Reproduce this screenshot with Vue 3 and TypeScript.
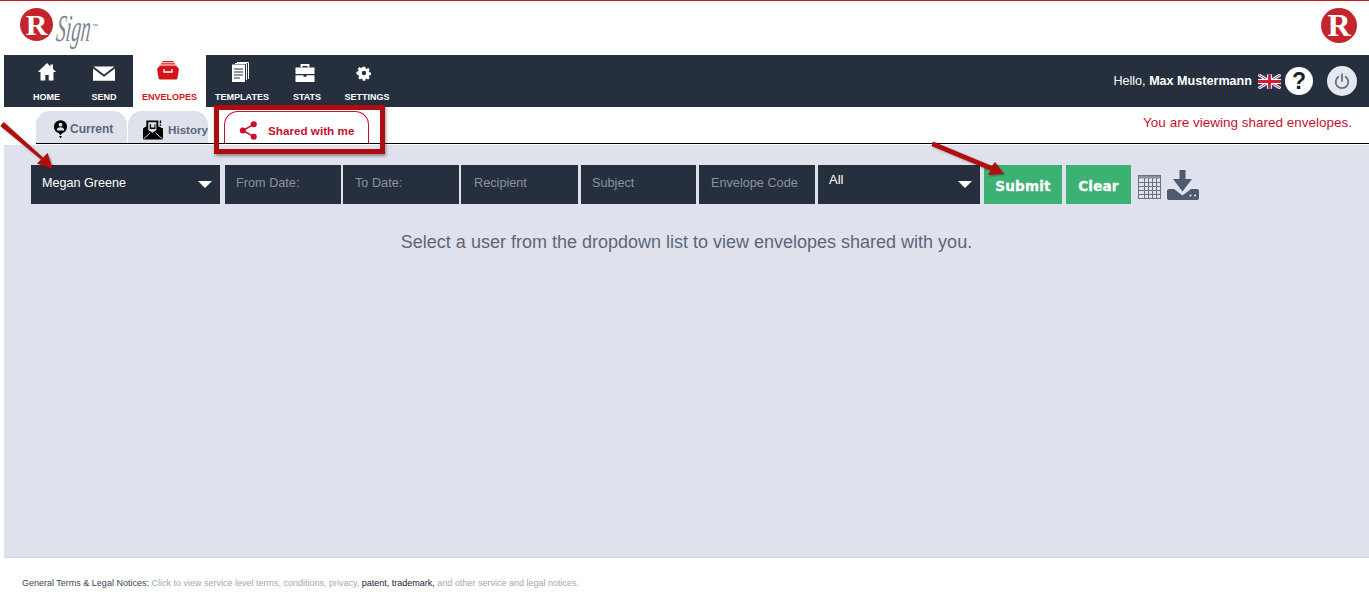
<script setup lang="ts">
const navItems = [
  { label: 'HOME', icon: 'home', width: 57, shift: 0 },
  { label: 'SEND', icon: 'send', width: 58, shift: 0 },
  { label: 'ENVELOPES', icon: 'box', width: 73, shift: -3, active: true },
  { label: 'TEMPLATES', icon: 'doc', width: 72, shift: -5 },
  { label: 'STATS', icon: 'case', width: 58, shift: -5 },
  { label: 'SETTINGS', icon: 'gear', width: 62, shift: -6 },
]

const filters = [
  { label: 'From Date:', width: 116, gap: 2, pad: 11 },
  { label: 'To Date:', width: 116, gap: 2, pad: 12 },
  { label: 'Recipient', width: 117, gap: 3, pad: 13 },
  { label: 'Subject', width: 115, gap: 3, pad: 11 },
  { label: 'Envelope Code', width: 116, gap: 3, pad: 12 },
]

const calCols = [6, 10, 14, 18]
const calRows = [7, 11, 15, 19]
</script>

<template>
  <div class="page">
    <header class="top">
      <div class="brand">
        <div class="logo-r"><span>R</span></div>
        <span class="logo-sign">Sign</span>
        <span class="logo-tm">™</span>
      </div>
      <div class="logo-r logo-right"><span>R</span></div>
    </header>

    <nav class="nav">
      <div
        v-for="item in navItems"
        :key="item.label"
        class="nav-item"
        :class="{ active: item.active }"
        :style="{ width: item.width + 'px' }"
      >
        <svg class="nav-icon" viewBox="0 0 24 24" width="24" height="24" :style="{ marginLeft: item.shift + 'px' }">
          <path v-if="item.icon === 'home'" fill="#fff" d="M12 2 2.800 11h2.700v8.500h4.800v-5.600h3.400v5.600h4.800V11h2.700l-3.200-3.100V3.500h-2.500v2z" />
          <g v-else-if="item.icon === 'send'">
            <path fill="#fff" d="M1.500 5.500h21L12 13.500z" />
            <path fill="#fff" d="M1 7.500v12.200h22V7.500L12 15.800z" />
          </g>
          <g v-else-if="item.icon === 'box'">
            <path fill="#d5141c" d="M6.500 0h11l.6 1.200H5.900zM5.200 2.200h13.600l.6 1.400H4.600z" />
            <path fill="#d5141c" d="M4 4.500h16L23 8l-1.500 9a2 2 0 0 1-2 1.500h-15a2 2 0 0 1-2-1.500L1 8z" />
            <path fill="none" stroke="#fff" stroke-width="1.300" d="M8 8v3h8V8" />
          </g>
          <g v-else-if="item.icon === 'doc'">
            <path fill="none" stroke="#fff" stroke-width="1" d="M7 2.500h11.500V19M9 1.500h11.500V18" />
            <path fill="#fff" d="M4 3.500h13V21H4z" />
            <path stroke="#262f3d" stroke-width="1.200" d="M6 8h9M6 11h9M6 14h9M6 17h6" />
          </g>
          <g v-else-if="item.icon === 'case'">
            <path fill="none" stroke="#fff" stroke-width="1.800" d="M8.500 6.500V4h7v2.500" />
            <path fill="#fff" d="M2.500 6.500h19V13h-19zM2.500 14.200h8v1.500h3v-1.500h8V21h-19z" />
          </g>
          <path
            v-else
            fill="#fff"
            fill-rule="evenodd"
            d="M10 2.500h4l.5 2.800 1.700.7 2.300-1.600 2.800 2.800-1.600 2.300.7 1.700 2.800.5v4l-2.800.5-.7 1.700 1.600 2.300-2.800 2.800-2.300-1.600-1.700.7-.5 2.800h-4l-.5-2.800-1.700-.7-2.300 1.600-2.800-2.800 1.600-2.300-.7-1.700L0 14.500v-4l2.800-.5.700-1.700-1.600-2.300 2.800-2.800 2.300 1.600 1.700-.7zM12 9a3.500 3.500 0 1 0 0 7 3.500 3.500 0 0 0 0-7z"
            transform="translate(4.400 4.100) scale(.63)"
          />
        </svg>
        <span class="nav-label">{{ item.label }}</span>
      </div>

      <div class="user">
        <span class="hello">Hello, <b>Max Mustermann</b></span>
        <svg class="flag" viewBox="0 0 24 15" width="23" height="15">
          <rect width="24" height="15" fill="#2b3a78" />
          <path stroke="#fff" stroke-width="3" d="M0 0l24 15M24 0 0 15" />
          <path stroke="#d0202e" stroke-width="1" d="M0 0l24 15M24 0 0 15" />
          <path stroke="#fff" stroke-width="5" d="M12 0v15M0 7.500h24" />
          <path stroke="#d0202e" stroke-width="3" d="M12 0v15M0 7.500h24" />
        </svg>
        <div class="help">?</div>
        <div class="power">
          <svg viewBox="0 0 20 20" width="18" height="18">
            <path fill="none" stroke="#667080" stroke-width="2" stroke-linecap="round" d="M6 5.200a7 7 0 1 0 8 0M10 2.500v7.500" />
          </svg>
        </div>
      </div>
    </nav>

    <div class="tabs-row">
      <div class="tab tab-current">
        <svg viewBox="0 0 16 20" width="15" height="19">
          <path fill="#000" d="M8 0a7 7 0 0 1 7 7c0 3.500-2.500 6-5 6.800L8 16l-2-2.200C3.500 13 1 10.500 1 7a7 7 0 0 1 7-7z" />
          <circle cx="8" cy="4.800" r="2" fill="#dfe2ec" />
          <path fill="#dfe2ec" d="M4 11c0-2.500 1.800-3.500 4-3.500s4 1 4 3.500z" />
          <path fill="#000" d="M6.500 17h3L8 19.500z" />
        </svg>
        <span>Current</span>
      </div>
      <div class="tab tab-history">
        <svg viewBox="0 0 21 21" width="21" height="21">
          <path fill="#000" d="M0 9.500 3.500 7V1H16v6l5 2.500V21H0z" />
          <path fill="#dfe2ec" d="M5.500 3H14v8l-4 3-4.500-3z" />
          <path fill="#000" d="M7 5h1.500v3.500H12V5h1v5H7z" />
          <path fill="#000" d="M17.500 1H19v3h-1.500zM17.500 5H19v1.500h-1.500z" />
          <path stroke="#dfe2ec" stroke-width="1" d="M0.500 20.500 7.500 14M20.500 20.500 13 14" />
        </svg>
        <span>History</span>
      </div>
      <div class="tab tab-shared">
        <svg viewBox="0 0 20 20" width="19" height="19">
          <path fill="none" stroke="#c8102e" stroke-width="1.600" d="M15.500 3.500 4 10l11.500 6.500" />
          <circle cx="15.500" cy="3.500" r="3.200" fill="#c8102e" />
          <circle cx="4" cy="10" r="3.200" fill="#c8102e" />
          <circle cx="15.500" cy="16.500" r="3.200" fill="#c8102e" />
        </svg>
        <span>Shared with me</span>
      </div>
      <div class="notice">You are viewing shared envelopes.</div>
    </div>

    <main class="content">
      <div class="filters">
        <div class="field select user-select">
          <span>Megan Greene</span>
          <i class="caret"></i>
        </div>
        <div
          v-for="f in filters"
          :key="f.label"
          class="field input"
          :style="{ width: f.width + 'px', marginRight: f.gap + 'px', paddingLeft: f.pad + 'px' }"
        >
          {{ f.label }}
        </div>
        <div class="field select status-select">
          <span>All</span>
          <i class="caret"></i>
        </div>
        <button class="btn submit">Submit</button>
        <button class="btn clear">Clear</button>
        <svg class="calendar" viewBox="0 0 23 24" width="23" height="24">
          <rect x=".5" y=".5" width="22" height="23" fill="none" stroke="#69727f" />
          <path fill="#8b929e" d="M1 1h21v2.500H1z" />
          <path v-for="x in calCols" :key="'c' + x" stroke="#69727f" :d="`M${x + 0.5} 3v20`" />
          <path v-for="y in calRows" :key="'r' + y" stroke="#69727f" :d="`M1 ${y + 0.5}h21`" />
        </svg>
        <svg class="download" viewBox="0 0 32 30" width="32" height="30">
          <path fill="#4f5a6e" d="M12.500 0h6v9h6.500l-9.500 12.500L6 9h6.500z" />
          <path fill="#4f5a6e" d="M2 19h5l8.500 6.500L24 19h6a2 2 0 0 1 2 2v7a2 2 0 0 1-2 2H2a2 2 0 0 1-2-2v-7a2 2 0 0 1 2-2z" />
          <circle cx="23.500" cy="25.500" r="1.100" fill="#dfe2ec" />
          <circle cx="28" cy="25.500" r="1.100" fill="#dfe2ec" />
        </svg>
      </div>
      <p class="empty">Select a user from the dropdown list to view envelopes shared with you.</p>
    </main>

    <footer class="footer">
      <span class="dark">General Terms &amp; Legal Notices:</span>
      Click to view service level terms, conditions, privacy,
      <span class="darker">patent, trademark,</span>
      and other service and legal notices.
    </footer>

    <!-- screenshot annotations -->
    <div class="callout"></div>
    <svg class="arrows" viewBox="0 0 1369 597" width="1369" height="597">
      <defs>
        <filter id="shade" x="-20%" y="-20%" width="140%" height="140%">
          <feDropShadow dx="1" dy="1" stdDeviation="1" flood-color="#000" flood-opacity=".35" />
        </filter>
      </defs>
      <g fill="#b00b0f" filter="url(#shade)">
        <path d="M.3 125.900 3.700 122.100 43 157.500l4.500-4.500L53 169l-16-5.500 4-4z" />
        <path d="M931.500 146l1.500-4.500 59 24.500 3-4 9 12-16 1 2.500-4.500z" />
      </g>
    </svg>
  </div>
</template>

<style>
html,
body {
  margin: 0;
  background: #fff;
}
</style>

<style scoped>
.page {
  position: relative;
  width: 1369px;
  height: 597px;
  overflow: hidden;
  font-family: "Liberation Sans", Arial, sans-serif;
  background: #fff;
}

.top {
  height: 55px;
  border-top: 1px solid #d01a1f;
  display: flex;
  align-items: flex-start;
  justify-content: space-between;
  padding: 6px 12px 0 20px;
  box-sizing: border-box;
}

.brand {
  display: flex;
  align-items: flex-start;
}

.logo-r {
  width: 33px;
  height: 33px;
  margin-top: 1px;
  border-radius: 50%;
  background: #c4242b;
  color: #fff;
  display: flex;
  align-items: center;
  justify-content: center;
  font-family: "Liberation Serif", serif;
  font-weight: 700;
  font-size: 30px;
  line-height: 33px;
}

.logo-right {
  width: 36px;
  height: 35px;
  font-size: 32px;
}

.logo-sign {
  width: 33px;
  margin: 2px 0 0 6px;
  font-family: "Liberation Serif", serif;
  font-style: italic;
  font-size: 38px;
  line-height: 38px;
  color: #7c8590;
  transform: scaleX(0.5) skewX(-12deg);
  transform-origin: left top;
}

.logo-tm {
  font-size: 6px;
  line-height: 8px;
  margin-top: 15px;
  color: #6b7480;
}

.nav {
  height: 52px;
  margin-left: 4px;
  padding-left: 14px;
  display: flex;
  background: #262f3d;
}

.nav-item {
  display: flex;
  flex-direction: column;
  align-items: center;
  box-sizing: border-box;
  padding-top: 6px;
  color: #fff;
}

.nav-item.active {
  background: #fff;
  color: #d5141c;
}

.nav-icon {
  display: block;
}

.nav-label {
  margin-top: 6px;
  font-size: 9px;
  font-weight: 700;
  line-height: 12px;
  white-space: nowrap;
}

.user {
  margin-left: auto;
  display: flex;
  align-items: center;
  height: 52px;
  padding-right: 12px;
}

.hello {
  font-size: 12.600px;
  color: #fff;
}

.flag {
  margin-left: 6px;
}

.help {
  width: 28px;
  height: 28px;
  margin-left: 4px;
  border-radius: 50%;
  background: #fff;
  color: #1c2330;
  text-align: center;
  font-size: 23px;
  font-weight: 700;
  line-height: 28px;
}

.power {
  width: 30px;
  height: 30px;
  margin-left: 14px;
  border-radius: 50%;
  background: #e6e8f0;
  display: flex;
  align-items: center;
  justify-content: center;
}

.tabs-row {
  position: relative;
  height: 37px;
  margin-left: 36px;
  box-sizing: border-box;
  border-bottom: 1px solid #000;
  display: flex;
  align-items: flex-end;
  gap: 1px;
}

.tab {
  height: 32px;
  box-sizing: border-box;
  display: flex;
  align-items: center;
  border-radius: 14px 14px 0 0;
  font-size: 12px;
  font-weight: 700;
  color: #5c6679;
  background: #dfe2ec;
}

.tab-current {
  width: 91px;
  padding: 4px 0 0 17px;
  gap: 2px;
}

.tab-history {
  width: 80px;
  padding: 4px 0 0 15px;
  gap: 5px;
  font-size: 11.600px;
}

.tab-shared {
  width: 145px;
  margin-left: 15px;
  padding: 6px 0 0 14px;
  gap: 10px;
  border: 1px solid #c8102e;
  border-bottom: 0;
  color: #c8102e;
  background: #fff;
  font-size: 11.700px;
}

.notice {
  position: absolute;
  right: 17px;
  top: 8px;
  font-size: 13.500px;
  color: #c8102e;
  white-space: nowrap;
}

.content {
  height: 413px;
  margin: 1px 0 0 4px;
  padding: 20px 0 0 27px;
  box-sizing: border-box;
  background: #dfe2ec;
  border-bottom: 1px solid #d3d6df;
}

.filters {
  display: flex;
  align-items: flex-start;
}

.field {
  height: 39px;
  box-sizing: border-box;
  background: #262f3d;
  white-space: nowrap;
}

.select {
  position: relative;
  color: #fff;
}

.user-select {
  width: 189px;
  margin-right: 5px;
  padding: 11px 0 0 11px;
  font-size: 12.600px;
}

.status-select {
  width: 162px;
  margin-right: 4px;
  padding: 7px 0 0 11px;
  font-size: 13px;
}

.caret {
  position: absolute;
  right: 8px;
  top: 16px;
  border-left: 7px solid transparent;
  border-right: 7px solid transparent;
  border-top: 7px solid #fff;
}

.input {
  padding-top: 11px;
  color: #8b929e;
  font-size: 12.700px;
}

.btn {
  height: 39px;
  padding: 2px 0 0;
  border: 0;
  background: #3bb273;
  color: #fff;
  font-family: "DejaVu Sans", sans-serif;
  font-size: 13.500px;
  font-weight: 700;
  letter-spacing: 0.2px;
  -webkit-text-stroke: 0.3px #fff;
}

.submit {
  width: 78px;
  margin-right: 4px;
}

.clear {
  width: 65px;
}

.calendar {
  margin: 10px 0 0 7px;
}

.download {
  margin: 5px 0 0 6px;
}

.empty {
  margin: 27px 0 0;
  padding-right: 27px;
  text-align: center;
  font-size: 18px;
  line-height: 22px;
  color: #5c6679;
}

.footer {
  padding: 20px 0 0 22px;
  font-size: 9px;
  color: #a3a7ae;
}

.dark {
  color: #3c4656;
}

.darker {
  color: #1c2330;
}

.callout {
  position: absolute;
  left: 214px;
  top: 105px;
  width: 171px;
  height: 49px;
  box-sizing: border-box;
  border: 5px solid #b00b0f;
  box-shadow: 1px 2px 3px rgba(0, 0, 0, 0.4);
}

.arrows {
  position: absolute;
  left: 0;
  top: 0;
  pointer-events: none;
}
</style>
